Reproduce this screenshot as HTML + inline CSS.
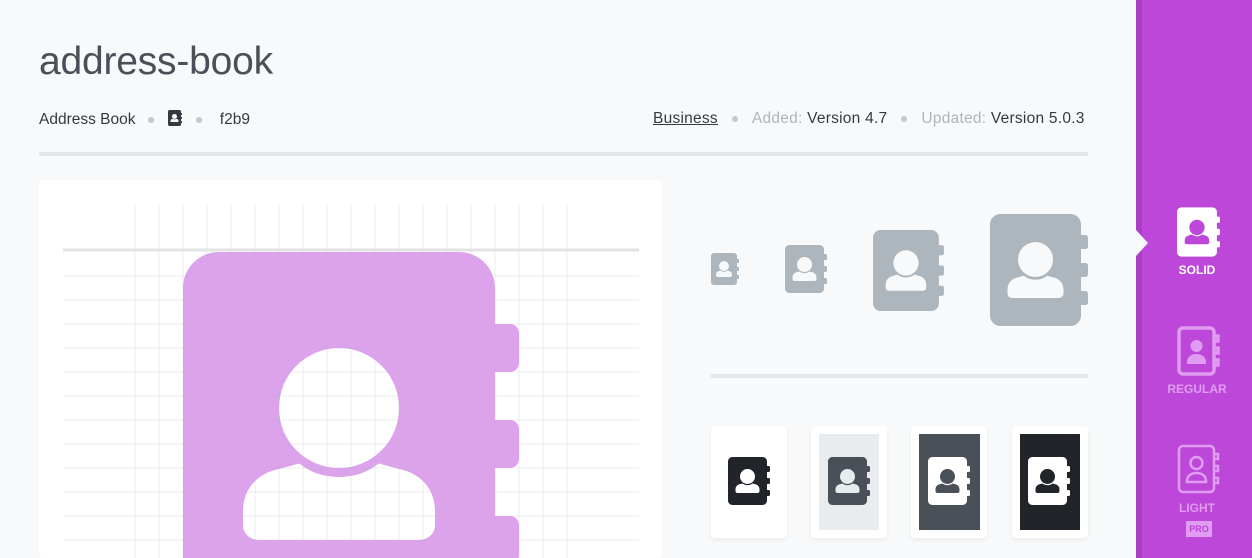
<!DOCTYPE html>
<html><head><meta charset="utf-8"><style>
*{margin:0;padding:0;box-sizing:border-box}
html,body{width:1252px;height:558px;overflow:hidden}
body{background:#f8f9fa;font-family:"Liberation Sans",sans-serif;position:relative;color:#343a40}
.abs{position:absolute}
h1{position:absolute;left:39px;top:40px;font-size:39px;font-weight:normal;color:#495057;letter-spacing:-0.2px}
.meta{position:absolute;top:110px;font-size:15.5px;color:#343a40;white-space:nowrap}
.dot{display:inline-block;width:6px;height:6px;border-radius:50%;background:#c4c9ce;vertical-align:middle;margin:0 14px}
.mut{color:#adb5bd}
svg.i{position:absolute;overflow:visible}
</style></head><body>
<svg width="0" height="0" style="position:absolute">
<defs>
<symbol id="ab" viewBox="0 0 448 512">
<path fill="var(--b)" d="M48 0H368C394.5 0 416 21.5 416 48V96H436C442.6 96 448 101.4 448 108V148C448 154.6 442.6 160 436 160H416V224H436C442.6 224 448 229.4 448 236V276C448 282.6 442.6 288 436 288H416V352H436C442.6 352 448 357.4 448 364V404C448 410.6 442.6 416 436 416H416V464C416 490.5 394.5 512 368 512H48C21.5 512 0 490.5 0 464V48C0 21.5 21.5 0 48 0Z"/>
<path fill="var(--p)" d="M80 346C80 318 96 300 118 292L155 282C170 294 188 300 208 300C228 300 246 294 261 282L298 292C320 300 336 318 336 346V364C336 376 326 384 314 384H102C90 384 80 376 80 364Z"/>
<ellipse cx="208" cy="208" rx="80" ry="80" fill="var(--p)"/>
</symbol>
</defs></svg>

<h1>address-book</h1>
<div class="meta" style="left:39px">Address Book<span class="dot" style="margin-left:12px"></span><svg width="14" height="16" style="vertical-align:-2px;--b:#343a40;--p:#f8f9fa"><use href="#ab"/></svg><span class="dot"></span>&nbsp;f2b9</div>
<div class="meta" style="left:653px;letter-spacing:0.25px"><span style="text-decoration:underline">Business</span><span class="dot"></span><span class="mut">Added:</span> Version 4.7<span class="dot"></span><span class="mut">Updated:</span> Version 5.0.3</div>
<div class="abs" style="left:39px;top:152px;width:1049px;height:4px;background:#e5e7ea"></div>

<div class="abs" style="left:39px;top:180px;width:623px;height:378px;background:#fff;border-radius:4px;overflow:hidden">
<svg width="623" height="378" style="position:absolute;left:0;top:0">
<svg x="144" y="72" width="336" height="384" style="--b:#dca3ec;--p:#fff"><use href="#ab"/></svg>
<g stroke="rgba(180,180,190,0.12)" stroke-width="2">
<line x1="96" y1="24" x2="96" y2="378"/><line x1="120" y1="24" x2="120" y2="378"/><line x1="144" y1="24" x2="144" y2="378"/><line x1="168" y1="24" x2="168" y2="378"/><line x1="192" y1="24" x2="192" y2="378"/><line x1="216" y1="24" x2="216" y2="378"/><line x1="240" y1="24" x2="240" y2="378"/><line x1="264" y1="24" x2="264" y2="378"/><line x1="288" y1="24" x2="288" y2="378"/><line x1="312" y1="24" x2="312" y2="378"/><line x1="336" y1="24" x2="336" y2="378"/><line x1="360" y1="24" x2="360" y2="378"/><line x1="384" y1="24" x2="384" y2="378"/><line x1="408" y1="24" x2="408" y2="378"/><line x1="432" y1="24" x2="432" y2="378"/><line x1="456" y1="24" x2="456" y2="378"/><line x1="480" y1="24" x2="480" y2="378"/><line x1="504" y1="24" x2="504" y2="378"/><line x1="528" y1="24" x2="528" y2="378"/>
<line x1="24" y1="96" x2="600" y2="96"/><line x1="24" y1="120" x2="600" y2="120"/><line x1="24" y1="144" x2="600" y2="144"/><line x1="24" y1="168" x2="600" y2="168"/><line x1="24" y1="192" x2="600" y2="192"/><line x1="24" y1="216" x2="600" y2="216"/><line x1="24" y1="240" x2="600" y2="240"/><line x1="24" y1="264" x2="600" y2="264"/><line x1="24" y1="288" x2="600" y2="288"/><line x1="24" y1="312" x2="600" y2="312"/><line x1="24" y1="336" x2="600" y2="336"/><line x1="24" y1="360" x2="600" y2="360"/>
</g>
<line x1="24" y1="70" x2="600" y2="70" stroke="#e3e3e3" stroke-width="3"/>
</svg>
</div>

<svg class="i" style="left:711px;top:253px;--b:#adb5bd;--p:#f8f9fa" width="28" height="32"><use href="#ab"/></svg>
<svg class="i" style="left:785px;top:245px;--b:#adb5bd;--p:#f8f9fa" width="42" height="48"><use href="#ab"/></svg>
<svg class="i" style="left:873px;top:230px;--b:#adb5bd;--p:#f8f9fa" width="71" height="81"><use href="#ab"/></svg>
<svg class="i" style="left:990px;top:214px;--b:#adb5bd;--p:#f8f9fa" width="98" height="112"><use href="#ab"/></svg>
<div class="abs" style="left:711px;top:374px;width:377px;height:4px;background:#e5e7ea"></div>

<div class="abs" style="left:711px;top:426px;width:76px;height:112px;background:#fff;border-radius:4px;box-shadow:0 2px 4px rgba(0,0,0,.06)"></div>
<div class="abs" style="left:811px;top:426px;width:76px;height:112px;background:#fff;border-radius:4px;box-shadow:0 2px 4px rgba(0,0,0,.06)"><div class="abs" style="left:8px;top:8px;width:60px;height:96px;background:#e9ecef"></div></div>
<div class="abs" style="left:911px;top:426px;width:76px;height:112px;background:#fff;border-radius:4px;box-shadow:0 2px 4px rgba(0,0,0,.06)"><div class="abs" style="left:8px;top:8px;width:61px;height:96px;background:#495057"></div></div>
<div class="abs" style="left:1012px;top:426px;width:76px;height:112px;background:#fff;border-radius:4px;box-shadow:0 2px 4px rgba(0,0,0,.06)"><div class="abs" style="left:8px;top:8px;width:60px;height:96px;background:#212529"></div></div>
<svg class="i" style="left:728px;top:457px;--b:#212529;--p:#fff" width="42" height="48"><use href="#ab"/></svg>
<svg class="i" style="left:828px;top:457px;--b:#495057;--p:#e9ecef" width="42" height="48"><use href="#ab"/></svg>
<svg class="i" style="left:928px;top:457px;--b:#fff;--p:#495057" width="42" height="48"><use href="#ab"/></svg>
<svg class="i" style="left:1028px;top:457px;--b:#fff;--p:#212529" width="42" height="48"><use href="#ab"/></svg>

<div class="abs" style="left:1136px;top:0;width:116px;height:558px;background:#bd47d9"></div>
<div class="abs" style="left:1136px;top:0;width:6px;height:558px;background:#a93fc3"></div>
<div class="abs" style="left:1136px;top:230px;width:0;height:0;border-top:13px solid transparent;border-bottom:13px solid transparent;border-left:12px solid #f8f9fa"></div>
<svg class="i" style="left:1177px;top:207px;--b:#fff;--p:#bd47d9" width="43" height="50"><use href="#ab"/></svg>
<div class="abs" style="left:1142px;top:263px;width:110px;text-align:center;color:#fff;font-size:12px;font-weight:bold">SOLID</div>
<svg class="i" style="left:1177px;top:326px" width="43" height="50" viewBox="0 0 43 50"><g fill="none" stroke="#df9cf0" stroke-width="3.5"><rect x="2" y="2" width="35" height="46" rx="4"/><path d="M37 10h4v5h-4M37 22h4v5h-4M37 34h4v5h-4"/></g><circle cx="19.5" cy="20" r="6" fill="#df9cf0"/><path d="M10 36c0-5 4-8 9.5-8s9.5 3 9.5 8v2h-19z" fill="#df9cf0"/></svg>
<div class="abs" style="left:1142px;top:382px;width:110px;text-align:center;color:#df9cf0;font-size:12px;font-weight:bold">REGULAR</div>
<svg class="i" style="left:1177px;top:444px" width="43" height="50" viewBox="0 0 43 50"><g fill="none" stroke="#df9cf0" stroke-width="2.5"><rect x="2" y="2" width="35" height="46" rx="4"/><path d="M37 10h4v5h-4M37 22h4v5h-4M37 34h4v5h-4"/><circle cx="19.5" cy="19" r="6"/><path d="M10 37c0-5 4-8 9.5-8s9.5 3 9.5 8v1h-19z"/></g></svg>
<div class="abs" style="left:1142px;top:501px;width:110px;text-align:center;color:#df9cf0;font-size:12px;font-weight:bold">LIGHT</div>
<div class="abs" style="left:1186px;top:521px;width:26px;height:16px;background:#df9cf0;color:#bd47d9;font-size:9px;font-weight:bold;text-align:center;line-height:16px">PRO</div>
</body></html>
